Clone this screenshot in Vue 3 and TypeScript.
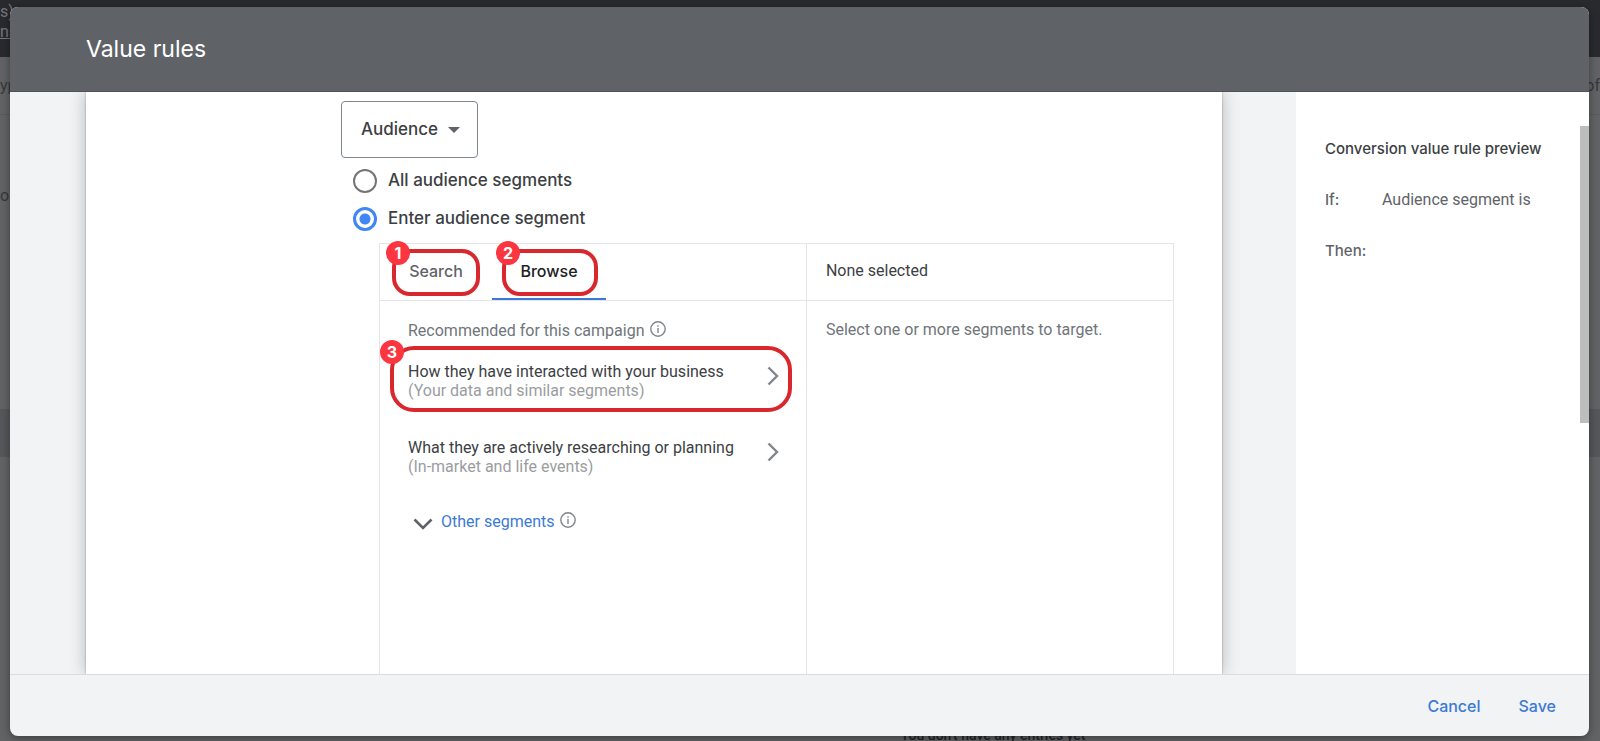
<script setup lang="ts">
import { ref } from 'vue'

interface Segment {
  title: string
  detail: string
  step?: number
}

const dimension = ref('Audience')
const scope = ref('enter')
const activeTab = ref('Browse')

const scopes = [
  { value: 'all', label: 'All audience segments' },
  { value: 'enter', label: 'Enter audience segment' },
]

const tabs = [
  { name: 'Search', step: 1 },
  { name: 'Browse', step: 2 },
]

const segments: Segment[] = [
  {
    title: 'How they have interacted with your business',
    detail: '(Your data and similar segments)',
    step: 3,
  },
  {
    title: 'What they are actively researching or planning',
    detail: '(In-market and life events)',
  },
]
</script>

<template>
  <div class="app">
    <div class="page" aria-hidden="true">
      <div class="page-top">
        <span>s)</span>
        <span class="underlined">ns</span>
      </div>
      <div class="page-bar">
        <span>yp</span>
        <span>of</span>
      </div>
      <div class="page-row">on</div>
      <div class="page-fill"></div>
      <div class="page-selected"></div>
      <div class="page-rest"></div>
      <p class="page-empty">You don't have any entries yet</p>
    </div>

    <div class="overlay">
      <section class="dialog" role="dialog" aria-labelledby="dialog-title">
        <header class="dialog-head">
          <h1 id="dialog-title">Value rules</h1>
        </header>

        <div class="dialog-body">
          <main class="card">
            <div class="select-wrap">
              <select v-model="dimension" aria-label="Condition type">
                <option>Audience</option>
              </select>
              <svg class="caret" viewBox="0 0 12 6" aria-hidden="true"><path d="M0 0h12L6 6z" /></svg>
            </div>

            <div class="scopes">
              <label v-for="s in scopes" :key="s.value" class="scope">
                <input v-model="scope" type="radio" name="scope" :value="s.value" />
                <span>{{ s.label }}</span>
              </label>
            </div>

            <div class="picker">
              <div class="browse">
                <div class="tabs" role="tablist">
                  <button
                    v-for="t in tabs"
                    :key="t.name"
                    type="button"
                    role="tab"
                    class="tab"
                    :class="{ active: activeTab === t.name }"
                    :aria-selected="activeTab === t.name"
                    @click="activeTab = t.name"
                  >
                    {{ t.name }}
                    <span class="callout"><b>{{ t.step }}</b></span>
                  </button>
                </div>

                <div class="panel">
                  <p class="hint">
                    Recommended for this campaign
                    <svg class="info" viewBox="0 0 16 16" aria-hidden="true">
                      <circle cx="8" cy="8" r="7.2" />
                      <path d="M8 7v5M8 4.2v1.5" />
                    </svg>
                  </p>
                  <button v-for="seg in segments" :key="seg.title" type="button" class="segment">
                    <span class="segment-text">
                      <span>{{ seg.title }}</span>
                      <small>{{ seg.detail }}</small>
                    </span>
                    <svg class="next" viewBox="0 0 12 20" aria-hidden="true"><path d="M1.5 1.5L10 10l-8.5 8.5" /></svg>
                    <span v-if="seg.step" class="callout wide"><b>{{ seg.step }}</b></span>
                  </button>
                  <div class="other">
                    <button type="button">
                      <svg class="down" viewBox="0 0 20 12" aria-hidden="true"><path d="M1.5 1.5L10 10l8.5-8.5" /></svg>
                      Other segments
                    </button>
                    <svg class="info" viewBox="0 0 16 16" aria-hidden="true">
                      <circle cx="8" cy="8" r="7.2" />
                      <path d="M8 7v5M8 4.2v1.5" />
                    </svg>
                  </div>
                </div>
              </div>

              <div class="selected">
                <h2>None selected</h2>
                <p>Select one or more segments to target.</p>
              </div>
            </div>
          </main>

          <aside class="preview">
            <h2>Conversion value rule preview</h2>
            <dl>
              <dt>If:</dt>
              <dd>Audience segment is</dd>
              <dt>Then:</dt>
              <dd></dd>
            </dl>
            <div class="scroll-thumb"></div>
          </aside>
        </div>

        <footer class="dialog-foot">
          <button type="button">Cancel</button>
          <button type="button">Save</button>
        </footer>
      </section>
    </div>
  </div>
</template>

<style>
html,
body {
  margin: 0;
  background: #606163;
}
</style>

<style scoped>
* {
  box-sizing: border-box;
}

.app {
  position: relative;
  height: 100vh;
  overflow: hidden;
  font: 16px/20px Roboto, sans-serif;
  color: #3c4043;
}

h1,
h2,
p,
dl,
dd {
  margin: 0;
  font-weight: 400;
}

button,
select {
  margin: 0;
  padding: 0;
  border: 0;
  background: none;
  font: inherit;
  color: inherit;
  cursor: pointer;
}

/* Dimmed page behind the dialog */
.page {
  display: flex;
  flex-direction: column;
  height: 100%;
  background: #626365;
  color: #37383b;
}

.page-top {
  display: flex;
  flex-direction: column;
  height: 57px;
  padding-top: 2px;
  background: #292a2e;
  color: #77787b;
}

.underlined {
  text-decoration: underline;
}

.page-bar {
  display: flex;
  justify-content: space-between;
  align-items: center;
  height: 58px;
  border-bottom: 1px solid #5a5b5d;
}

.page-row {
  padding-top: 71px;
}

.page-fill {
  height: 203px;
}

.page-selected {
  height: 48px;
  background: #56575b;
}

.page-rest {
  flex: 1;
}

.page-empty {
  margin-bottom: -4px;
  padding-left: 386px;
  font: 500 14px/20px Roboto, sans-serif;
  text-align: center;
  color: #222325;
}

/* Dialog */
.overlay {
  position: absolute;
  inset: 0;
  display: flex;
  padding: 7px 11px 5px 10px;
}

.dialog {
  flex: 1;
  display: flex;
  flex-direction: column;
  overflow: hidden;
  border-radius: 8px;
  background: #f1f3f4;
  box-shadow: 0 2px 8px rgba(0, 0, 0, 0.4);
}

.dialog-head {
  flex: none;
  display: flex;
  align-items: center;
  height: 85px;
  padding: 0 76px;
  background: #5f6368;
  border-bottom: 1px solid #4f5257;
}

.dialog-head h1 {
  font: 23px/32px Inter, sans-serif;
  color: #fff;
}

.dialog-body {
  flex: 1;
  min-height: 0;
  display: flex;
  overflow: hidden;
}

.card {
  flex: 1;
  display: flex;
  flex-direction: column;
  margin: 0 74px 0 76px;
  padding: 9px 48px 0 255px;
  background: #fff;
  box-shadow: 0 0 2px rgba(0, 0, 0, 0.3), 0 0 16px rgba(0, 0, 0, 0.25);
}

.select-wrap {
  display: grid;
  align-items: center;
  align-self: flex-start;
  width: 137px;
}

.select-wrap > * {
  grid-area: 1 / 1;
}

select {
  height: 57px;
  padding: 0 19px 2px;
  appearance: none;
  border: 1px solid #80868b;
  border-radius: 4px;
  background: #fff;
  font: 500 17px/24px Inter, sans-serif;
}

.caret {
  justify-self: end;
  width: 12px;
  height: 6px;
  margin-right: 18px;
  fill: #5f6368;
  pointer-events: none;
}

.scopes {
  display: flex;
  flex-direction: column;
  gap: 14px;
  padding: 11px 0 12px 12px;
}

.scope {
  display: flex;
  align-items: center;
  gap: 11px;
  height: 24px;
  font: 500 17px/22px Inter, sans-serif;
}

.scope span {
  padding-bottom: 3px;
}

.scope input {
  width: 24px;
  height: 24px;
  margin: 0;
  appearance: none;
  border: 2px solid #757575;
  border-radius: 50%;
}

.scope input:checked {
  border: 3px solid #4285f4;
  background: radial-gradient(circle, #4285f4 5px, #fff 6px);
}

.picker {
  flex: 1;
  display: grid;
  grid-template-columns: 428fr 367fr;
  margin-left: 38px;
  border: 1px solid #e4e5e6;
  border-bottom: 0;
}

.browse {
  border-right: 1px solid #e4e5e6;
}

.tabs {
  display: flex;
  height: 57px;
  border-bottom: 1px solid #e4e5e6;
}

.tab {
  position: relative;
  min-width: 112px;
  padding: 0 26px;
  border-bottom: 2px solid transparent;
  font: 500 16px/24px Inter, sans-serif;
  color: #5f6368;
}

.tab.active {
  min-width: 114px;
  border-bottom-color: #3c78d8;
  color: #202124;
}

/* Numbered outline drawn around a control */
.callout {
  position: absolute;
  inset: 5px 12px 2px;
  border: 4px solid #d9272e;
  border-radius: 18px;
  pointer-events: none;
}

.tab.active .callout {
  right: 8px;
  left: 10px;
}

.callout b {
  position: absolute;
  top: -12px;
  left: -10px;
  width: 24px;
  height: 24px;
  border-radius: 50%;
  background: #fb3640;
  font: 700 16px/24px Inter, sans-serif;
  text-align: center;
  color: #fff;
}

.callout.wide {
  inset: -8px 14px -4px 10px;
  border-radius: 24px;
}

.callout.wide b {
  top: -10px;
  left: -14px;
}

.hint {
  display: flex;
  align-items: center;
  gap: 6px;
  padding: 20px 28px 0;
  color: #70757a;
}

.info {
  width: 16px;
  height: 16px;
  margin-bottom: 4px;
  fill: none;
  stroke: #80868b;
  stroke-width: 1.4;
}

.segment {
  position: relative;
  display: flex;
  justify-content: space-between;
  align-items: center;
  width: 100%;
  height: 54px;
  margin-top: 13px;
  padding: 0 27px 0 28px;
  text-align: left;
}

.segment + .segment {
  margin-top: 22px;
}

.segment-text {
  display: flex;
  flex-direction: column;
  line-height: 19px;
}

.segment small {
  font-size: 16px;
  color: #9a9da0;
}

.next {
  width: 12px;
  height: 20px;
  margin-bottom: 10px;
  fill: none;
  stroke: #80868b;
  stroke-width: 2.4;
}

.other {
  display: flex;
  align-items: center;
  gap: 5px;
  padding: 28px 28px 0 33px;
}

.other button {
  display: flex;
  align-items: center;
  gap: 8px;
  color: #3c7ad6;
}

.down {
  width: 20px;
  height: 12px;
  margin-top: 4px;
  fill: none;
  stroke: #5f6368;
  stroke-width: 2.6;
}

.selected h2 {
  height: 57px;
  padding: 0 19px;
  border-bottom: 1px solid #e4e5e6;
  font: 16px/54px Roboto, sans-serif;
}

.selected p {
  padding: 19px 19px 0;
  color: #70757a;
}

.preview {
  position: relative;
  flex: none;
  width: 293px;
  padding: 46px 29px 0;
  background: #fff;
}

.preview h2 {
  font: 500 15px/22px Inter, sans-serif;
  white-space: nowrap;
}

.preview dl {
  display: grid;
  grid-template-columns: 57px 1fr;
  row-gap: 31px;
  padding-top: 30px;
  color: #5f6368;
}

.preview dt {
  font: 500 15px/20px Inter, sans-serif;
}

.scroll-thumb {
  position: absolute;
  top: 34px;
  right: 0;
  width: 9px;
  height: 297px;
  background: #bdbdbd;
}

.dialog-foot {
  flex: none;
  display: flex;
  justify-content: flex-end;
  align-items: center;
  gap: 38px;
  height: 62px;
  padding: 0 33px;
  border-top: 1px solid #dadce0;
}

.dialog-foot button {
  font: 500 16px/24px Inter, sans-serif;
  color: #3c7ad6;
}
</style>
